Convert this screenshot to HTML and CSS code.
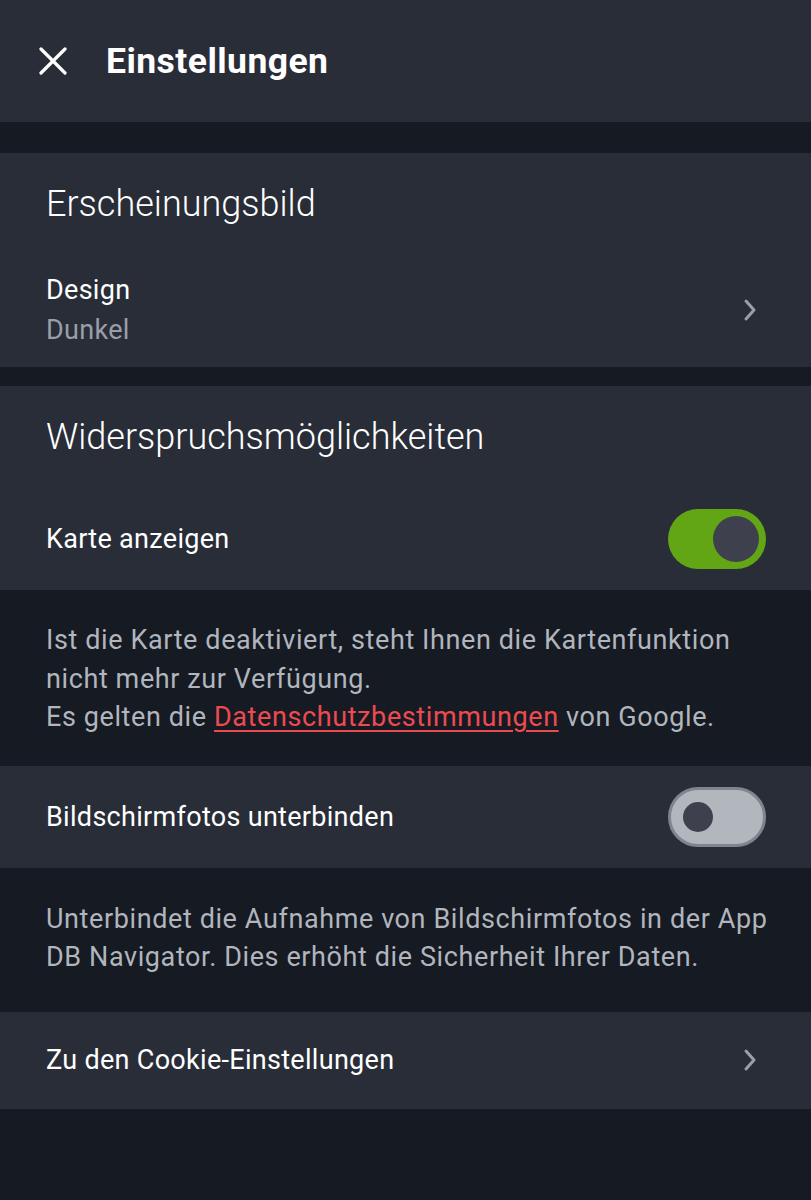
FILE: index.html
```html
<!DOCTYPE html>
<html lang="de">
<head>
  <meta charset="UTF-8" />
  <meta name="viewport" content="width=device-width, initial-scale=1.0" />
  <title>Einstellungen</title>
  <link rel="stylesheet" href="styles.css">
</head>
<body>

  <!-- Kopfzeile -->
  <header class="kopf">
    <button class="btn-schliessen" aria-label="Schließen">
      <svg width="28" height="28" viewBox="0 0 28 28">
        <path d="M2 2 L26 26 M26 2 L2 26" stroke="#fff" stroke-width="3.2" stroke-linecap="round" fill="none"/>
      </svg>
    </button>
    <h1 class="kopf-titel">Einstellungen</h1>
  </header>

  <!-- Erscheinungsbild -->
  <section class="block block-erster">
    <h2 class="block-titel">Erscheinungsbild</h2>
    <div class="zeile zeile-design">
      <div class="zeile-text">
        <div class="zeile-label">Design</div>
        <div class="zeile-wert">Dunkel</div>
      </div>
      <svg class="pfeil" width="16" height="24" viewBox="0 0 16 24">
        <path d="M4 3 L12 12 L4 21" stroke="#9a9ea7" stroke-width="3" stroke-linecap="round" stroke-linejoin="round" fill="none"/>
      </svg>
    </div>
  </section>

  <!-- Widerspruchsmöglichkeiten -->
  <section class="block">
    <h2 class="block-titel">Widerspruchsmöglichkeiten</h2>
    <div class="zeile zeile-schalter">
      <div class="zeile-label">Karte anzeigen</div>
      <span class="schalter an"><span class="knopf"></span></span>
    </div>
  </section>

  <p class="hinweis">
    Ist die Karte deaktiviert, steht Ihnen die Kartenfunktion nicht mehr zur Verfügung.<br>
    Es gelten die <a href="#">Datenschutzbestimmungen</a> von Google.
  </p>

  <section class="block">
    <div class="zeile zeile-schalter">
      <div class="zeile-label">Bildschirmfotos unterbinden</div>
      <span class="schalter aus"><span class="knopf"></span></span>
    </div>
  </section>

  <p class="hinweis hinweis-kurz">
    Unterbindet die Aufnahme von Bildschirmfotos in der App DB Navigator. Dies erhöht die Sicherheit Ihrer Daten.
  </p>

  <section class="block">
    <div class="zeile zeile-cookie">
      <div class="zeile-label">Zu den Cookie-Einstellungen</div>
      <svg class="pfeil" width="16" height="24" viewBox="0 0 16 24">
        <path d="M4 3 L12 12 L4 21" stroke="#9a9ea7" stroke-width="3" stroke-linecap="round" stroke-linejoin="round" fill="none"/>
      </svg>
    </div>
  </section>

</body>
</html>
```

FILE: styles.css
```css
body {
  margin: 0;
  background-color: #161a22;
  color: #ffffff;
  font-family: Roboto, "Liberation Sans", sans-serif;
  min-height: 1200px;
}

.kopf {
  display: flex;
  align-items: center;
  height: 122px;
  background-color: #292d38;
  margin-bottom: 31px;
}

.btn-schliessen {
  background: none;
  border: none;
  padding: 0;
  margin-left: 39px;
  width: 28px;
  height: 28px;
  display: flex;
  cursor: pointer;
}

.kopf-titel {
  margin: 0 0 0 39px;
  font-size: 35.5px;
  font-weight: 700;
  letter-spacing: 0.45px;
}

.block {
  background-color: #292d38;
}

.block-titel {
  margin: 0;
  height: 102px;
  display: flex;
  align-items: center;
  padding-left: 46px;
  font-size: 36px;
  font-weight: 300;
}

.block-erster {
  margin-bottom: 19px;
}

.zeile {
  display: flex;
  align-items: center;
  justify-content: space-between;
  padding: 0 45px 0 46px;
}

.zeile-design {
  height: 112px;
  padding-bottom: 2px;
  box-sizing: border-box;
}

.zeile-schalter {
  height: 102px;
}

.zeile-cookie {
  height: 97px;
}

.zeile-label {
  font-size: 27px;
  letter-spacing: 0.3px;
}

.zeile-wert {
  font-size: 27px;
  letter-spacing: 0.3px;
  color: #9a9ea7;
  margin-top: 8px;
}

.pfeil {
  margin-right: 8px;
}

.schalter {
  position: relative;
  width: 98px;
  height: 60px;
  border-radius: 30px;
  box-sizing: border-box;
  flex-shrink: 0;
}

.schalter.an {
  background-color: #63a615;
}

.schalter.aus {
  background-color: #b2b6bd;
  border: 3px solid #80848e;
}

.knopf {
  position: absolute;
  border-radius: 50%;
  background-color: #3e414d;
}

.schalter.an .knopf {
  width: 46px;
  height: 46px;
  top: 7px;
  right: 7px;
}

.schalter.aus .knopf {
  width: 30px;
  height: 30px;
  top: 12px;
  left: 12px;
}

.hinweis {
  margin: 0;
  padding: 31px 40px 29px 46px;
  font-size: 27px;
  letter-spacing: 0.6px;
  line-height: 38.5px;
  color: #b1b5bd;
}

.hinweis-kurz {
  padding-top: 32px;
  padding-bottom: 35px;
}

.hinweis a {
  color: #ec4b51;
  text-decoration: underline;
  text-underline-offset: 4px;
}
```
